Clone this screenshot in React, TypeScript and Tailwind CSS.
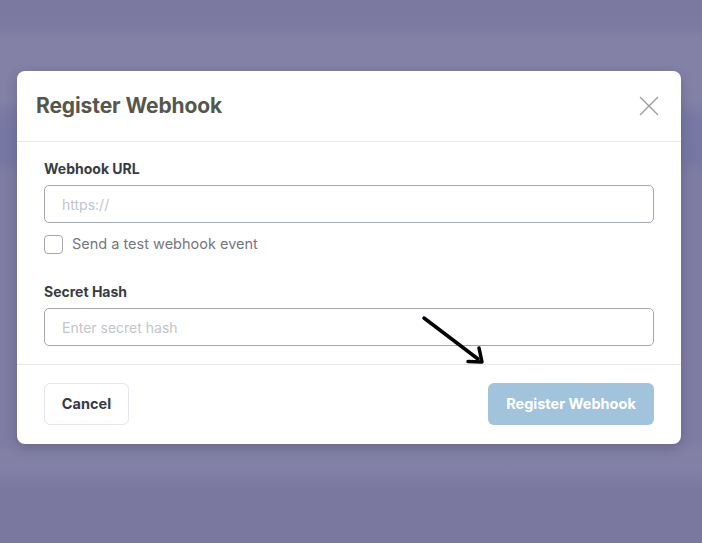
import React from "react";

export default function App() {
  return (
    <div
      className="relative w-[702px] h-[543px] overflow-hidden pt-[71px] pl-[17px] bg-[linear-gradient(to_bottom,#7b79a0_0px,#7c7aa1_25px,#8381a6_40px,#8381a6_100px,#7778a3_118px,#7677a2_160px,#7e7ca3_175px,#7e7ca3_440px,#8381a6_455px,#8280a6_470px,#7a789e_490px,#7a789e_543px)]"
      style={{ fontFamily: "Inter, 'Noto Sans', sans-serif" }}
    >
      <div className="w-[664px] bg-white rounded-lg shadow-[0_4px_12px_rgba(40,40,80,0.25)]">
        <div className="h-[71px] flex items-center justify-between pl-[19px] pr-[22px] border-b border-[#e6e7ea]">
          <h2 className="text-[21px] font-bold text-[#56574c] tracking-[-0.1px]">Register Webhook</h2>
          <svg width="20" height="20" viewBox="0 0 20 20" className="text-[#9a9a9a]">
            <path d="M1 1L19 19M19 1L1 19" stroke="currentColor" strokeWidth="1.3" fill="none" />
          </svg>
        </div>
        <div className="px-[27px] pt-[17px] pb-[18px] border-b border-[#e6e7ea]">
          <label className="block text-[14px] leading-[20px] font-bold text-[#373c44] mb-[6px]">Webhook URL</label>
          <input
            className="block w-full h-[38px] rounded-[5px] border border-[#a3a8ae] px-[17px] text-[14px] text-[#333] placeholder:text-[#c2c5cb] outline-none"
            placeholder="https://"
          />
          <div className="flex items-center mt-[11px] h-[20px]">
            <span className="w-[19px] h-[19px] rounded-[4px] border border-[#a3a8ae] bg-white" />
            <span className="ml-[9px] text-[14.5px] text-[#74777d]">Send a test webhook event</span>
          </div>
          <label className="block text-[14px] leading-[20px] font-bold text-[#373c44] mt-[28px] mb-[6px]">Secret Hash</label>
          <input
            className="block w-full h-[38px] rounded-[5px] border border-[#a3a8ae] px-[17px] text-[14px] text-[#333] placeholder:text-[#c2c5cb] outline-none"
            placeholder="Enter secret hash"
          />
        </div>
        <div className="flex items-center justify-between px-[27px] pt-[18px] pb-[19px]">
          <button className="w-[85px] h-[42px] rounded-[6px] border border-[#e3e6ec] bg-white text-[14.5px] font-bold text-[#343b45]">
            Cancel
          </button>
          <button className="w-[166px] h-[42px] rounded-[6px] bg-[#a2c3dc] text-[14.5px] font-bold text-white">
            Register Webhook
          </button>
        </div>
      </div>
      <svg className="absolute left-0 top-0 pointer-events-none" width="702" height="543">
        <line x1="424" y1="318" x2="478" y2="359" stroke="#000" strokeWidth="3.5" strokeLinecap="round" />
        <path d="M468 361.5 L482 362 L479 348" stroke="#000" strokeWidth="3.5" fill="none" strokeLinecap="round" strokeLinejoin="round" />
      </svg>
    </div>
  );
}
